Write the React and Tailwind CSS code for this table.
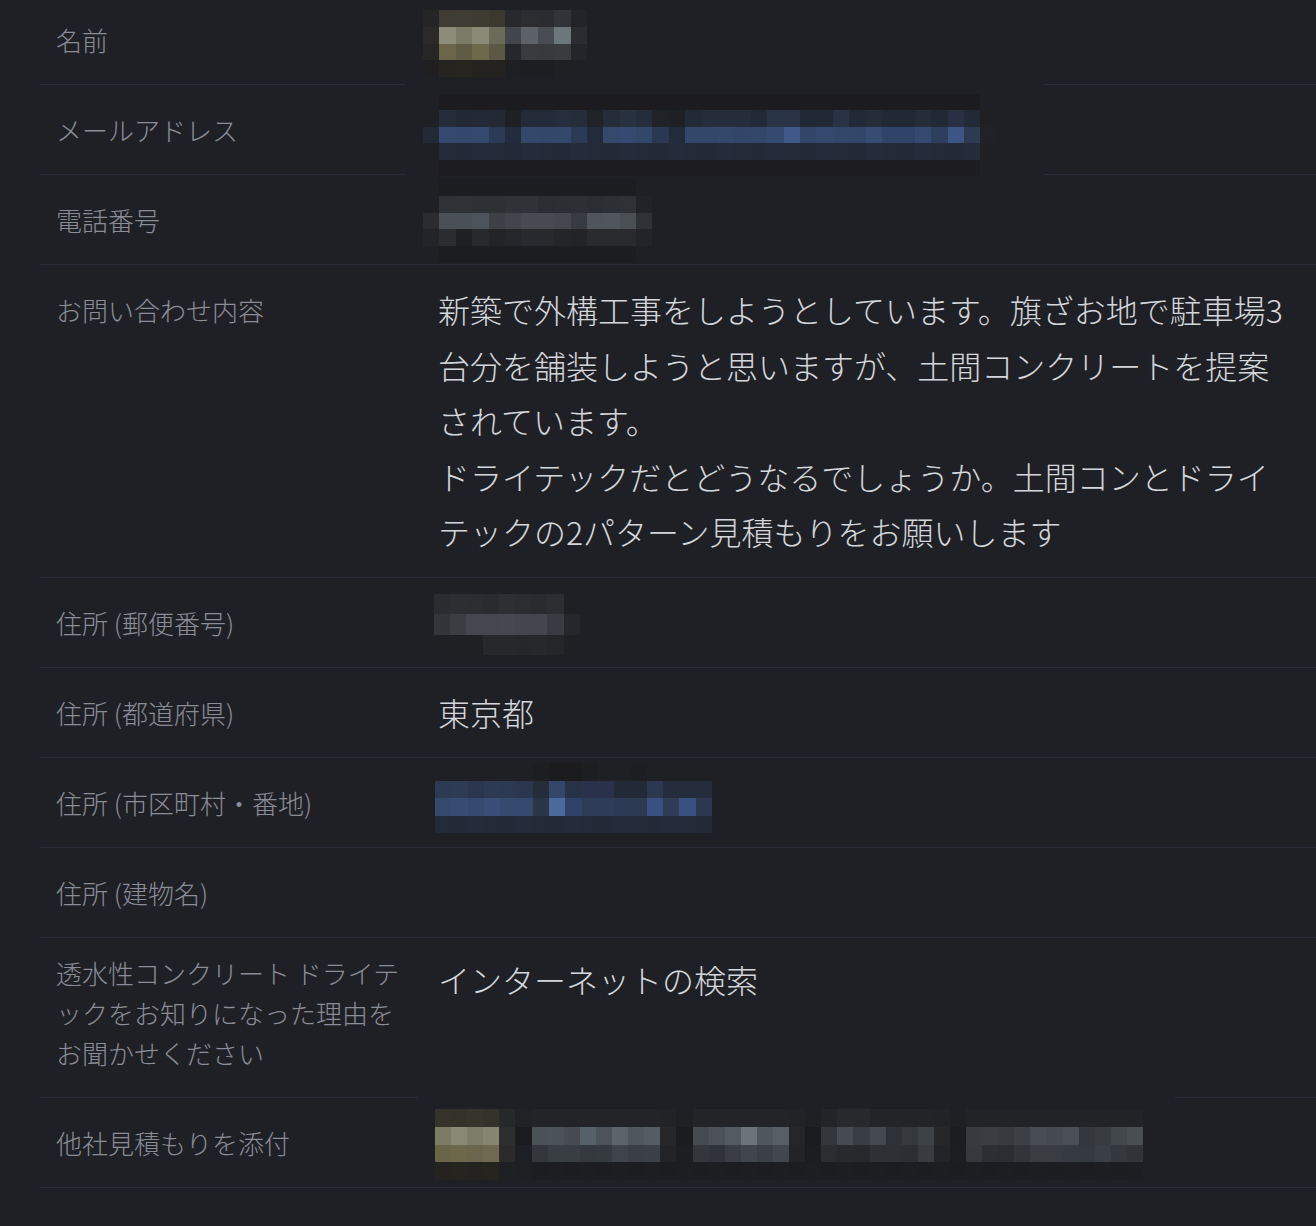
import React from "react";

const rep = (c, n) => Array(n).fill(c).join(" ");
const alt = (cs, n) => Array.from({ length: n }, (_, i) => cs[i % cs.length]).join(" ");

// pixelated (blurred out) personal data
const MOSAICS = {
  name: {
    cw: 16.4,
    ch: 16.7,
    rows: [
      "252527 3f3d33 403e34 3d3c30 3b392e 27292c 2b2d31 2a2c30 303337 232427",
      "2b2a28 8c8c78 7c7b68 8a8a77 6c6a58 42464b 5c6268 494d52 6c777c 2a2d30",
      "262624 6b6649 5e5b43 6d694b 5b5843 24272b 393b3f 383a3e 393b3f 232528",
      "1f1f21 252420 262520 24231f 24231f 1e1f22 1d1e21 1d1e21 1f2023 1f2023",
    ],
  },
  email: {
    cw: 16.4,
    ch: 16.5,
    rows: [
      "1f2025 " + rep("1c1c20", 33) + " 1f2025",
      "1f2024 252c3a 222834 232a37 222834 1f2024 232a38 232a38 262e3d 252c3a 1f2227 252c3a 28313f 252c3a 1f2227 1f2024 232a37 252c3a 252c3a 252c3a 232a37 2a3447 2b3446 222834 222834 2a3345 232a37 252c3a 222834 222834 252c3a 222834 283042 232a37 1f2024",
      "222a38 34496e 33486c 34496e 2c3a55 232c3c 34486c 33476a 34486c 2c3b55 222b3a 35496d 344a70 33476a 2a3851 222b3a 33476a 33476a 34486c 33466a 33476a 344a70 40598a 33466a 35496e 33476a 32466a 364c72 30446a 30446a 354a70 2e3f5e 3d5585 2c3a52 222226",
      "1f2024 " + alt(["232a38", "222937", "242b3a"], 33) + " 1f2024",
      "1f2025 " + rep("1d1d21", 33) + " 1f2025",
    ],
  },
  phone: {
    cw: 16.4,
    ch: 16.8,
    rows: [
      "1f2024 " + rep("1c1d21", 12) + " 1f2024",
      "1f2024 2e3236 2f3236 2d3034 2e3134 2f3236 2f3236 2a2d31 2b2e32 2c2f33 2a2d31 2c2f33 2e3135 222327",
      "2a2c30 4b5056 4a5058 4d535a 3d4145 42464c 474b51 474b51 44484d 383b41 50555a 50565b 4a4f54 2e3135",
      "232428 2a2c2f 1f2024 27292d 222427 242629 26292d 27292c 232528 222427 282a2e 282a2e 282a2e 232428",
      "1f2024 " + rep("1c1d21", 12) + " 1f2024",
    ],
  },
  postal: {
    cw: 16.2,
    ch: 20.3,
    rows: [
      "2b2c30 2d2e32 2c2d31 2a2b2f 2e2f33 2c2d31 2a2b2f 2d2e32 1f2024",
      "323539 3a3d41 44474d 44474d 45484e 43464c 43464c 383b3f 26272b",
      "1f2024 1f2024 1f2024 27282c 27282c 26272b 27282c 25262a 1f2024",
    ],
  },
  address: {
    cw: 16.3,
    ch: 17.5,
    rows: [
      "1f2024 1f2024 1f2024 1f2024 1f2024 1f2024 1d1e21 1b1b1e 1c1c1f 1d1e21 1f2024 1f2024 1d1e21 1f2024 1f2024 1f2024 1f2024",
      "2d3a54 2e3b55 2a374f 2d3a54 2c3952 2a374f 262d3a 34466a 283246 29324a 29324a 222a38 222a38 2c3850 252d3c 252d3c 252d3c",
      "34496d 364c72 34496d 384e76 34496d 34496d 2a3548 4a6a9e 30426a 2e3c58 2e3c58 2c3a54 2c3a54 3a5080 2e3c58 3a5080 2c3850",
      alt(["232a38", "222937", "242b3a"], 17),
    ],
  },
  files: {
    cw: 16.1,
    ch: 17.7,
    rows: [
      "36342a 34332b 36352b 34332b 27282a 212226 " +
        rep("232428", 8) + " 222327 1f2024 " + rep("232428", 6) +
        " 222327 1f2024 232428 28292c 28292c 232428 232428 232428 232428 222327 1f2024 " + rep("222327", 11),
      "7b7b66 8a8a72 7e7d68 858570 2e2e2f 1a1b1f " +
        "4a5157 4b5258 464c52 566068 4c535a 5b636b 4f565c 555d64 262729 1b1c20 " +
        "454b51 4c5259 535a61 6a7479 50575e 575e66 25262a 1a1b1e " +
        "33373b 474c53 3a3e42 454a50 2e3236 35393e 3d4247 262729 1c1d21 " +
        "373b3f 3a3e42 373b3f 3d4145 484d54 454a51 4a4f56 34373b 383b3f 42474b 494e53",
      "6a6549 6d684a 6b664b 6e6a4f 2b2b2c 1c1f24 " +
        "33373c 393e43 393e43 35393e 353a3f 3f444a 3b3f45 3c4147 232428 1d1e22 " +
        "33373c 30343a 3a3e44 40464c 3b4045 42474d 232428 1c1d21 " +
        "2b2d31 27292c 27292c 2d3135 2d3135 2b2e32 383c40 232428 1d1e22 " +
        "35393d 2b2e32 2a2d31 313438 393d42 393d42 363b42 353a3e 3a3f45 34383c 303337",
      "24231f 25241f 24231f 25241f 1f2023 1e1f22 " + alt(["1c1d21", "1d1e22"], 38),
    ],
  },
};

const Mosaic = ({ data, className }) => (
  <div className={className}>
    {data.rows.map((row, i) => (
      <div key={i} className="flex">
        {row.split(" ").map((c, j) => (
          <div
            key={j}
            style={{ width: data.cw, height: data.ch, backgroundColor: `#${c}` }}
          />
        ))}
      </div>
    ))}
  </div>
);

const Blur = ({ data, className }) => (
  <div className="h-[55px] flex items-center">
    <Mosaic data={data} className={className} />
  </div>
);

const Line = ({ left, gap }) =>
  left ? (
    <div className="flex h-px">
      <div className={`${left} bg-[#2a2b38]`} />
      <div className={gap} />
      <div className="flex-1 bg-[#2a2b38]" />
    </div>
  ) : (
    <div className="h-px bg-[#2a2b38]" />
  );

const Row = ({
  label,
  labelClass = "py-[17px] leading-[55px]",
  valueClass = "py-[17px]",
  left,
  gap,
  children,
}) => (
  <div>
    <div className="flex items-start">
      <div
        className={`w-[380px] shrink-0 pl-4 text-[26px] font-light text-[#8a8c98] whitespace-nowrap ${labelClass}`}
      >
        {label}
      </div>
      <div
        className={`flex-1 pl-[18px] text-[32px] font-light text-[#d3d6db] leading-[55px] whitespace-nowrap ${valueClass}`}
      >
        {children}
      </div>
    </div>
    <Line left={left} gap={gap} />
  </div>
);

export default function App() {
  return (
    <div className="min-h-screen bg-[#1f2025] pl-[40px] font-['Noto_Sans_CJK_JP','Noto_Sans',sans-serif]">
      {/* Contact info */}
      <Row
        label="名前"
        labelClass="pt-[12px] pb-[17px] leading-[55px]"
        valueClass="pt-[12px] pb-[17px]"
        left="w-[365px]"
        gap="w-[639px]"
      >
        <Blur data={MOSAICS.name} className="-ml-[15px] mt-[8px]" />
      </Row>
      <Row label="メールアドレス" left="w-[365px]" gap="w-[639px]">
        <Blur data={MOSAICS.email} className="-ml-[15px] mt-[11px]" />
      </Row>
      <Row label="電話番号">
        <Blur data={MOSAICS.phone} className="-ml-[15px] mt-[3px]" />
      </Row>

      {/* Inquiry */}
      <Row label="お問い合わせ内容" valueClass="pt-[17px] pb-[17.5px]">
        <p className="leading-[55.5px]">
          新築で外構工事をしようとしています。旗ざお地で駐車場3
          <br />
          台分を舗装しようと思いますが、土間コンクリートを提案
          <br />
          されています。
          <br />
          ドライテックだとどうなるでしょうか。土間コンとドライ
          <br />
          テックの2パターン見積もりをお願いします
        </p>
      </Row>

      {/* Address */}
      <Row label="住所 (郵便番号)">
        <Blur data={MOSAICS.postal} className="-ml-[4px] mt-[4px]" />
      </Row>
      <Row label="住所 (都道府県)">東京都</Row>
      <Row label="住所 (市区町村・番地)">
        <Blur data={MOSAICS.address} className="-ml-[3px] mb-[9px]" />
      </Row>
      <Row label="住所 (建物名)">
        <div className="h-[55px]" />
      </Row>

      <Row
        label={
          <>
            透水性コンクリート ドライテ
            <br />
            ックをお知りになった理由を
            <br />
            お聞かせください
          </>
        }
        labelClass="pt-[15px] pb-[24px] leading-[40px]"
        valueClass="pt-[14px]"
        left="w-[378px]"
        gap="w-[757px]"
      >
        インターネットの検索
      </Row>

      <Row label="他社見積もりを添付">
        <Blur data={MOSAICS.files} className="-ml-[3px] mt-[4px]" />
      </Row>
    </div>
  );
}
